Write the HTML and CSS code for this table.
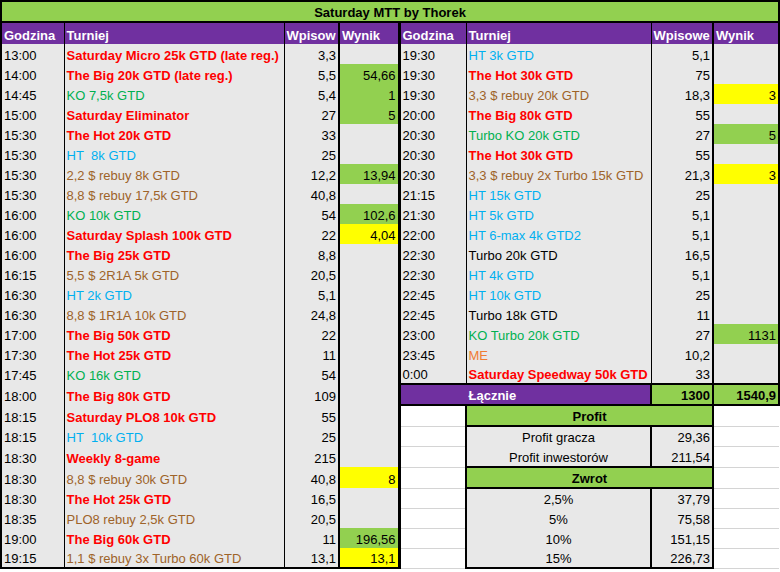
FILE: index.html
```html
<!DOCTYPE html>
<html lang="pl">
<head>
<meta charset="utf-8">
<title>Saturday MTT by Thorek</title>
<link rel="stylesheet" href="styles.css">
</head>
<body>
<table class="sheet">
  <colgroup>
    <col class="w1"><col class="w2"><col class="w3"><col class="w4">
    <col class="w5"><col class="w6"><col class="w7"><col class="w8">
  </colgroup>
  <tr class="title-row"><td class="title" colspan="8">Saturday MTT by Thorek</td></tr>
  <tr class="head-row">
    <td class="h c1">Godzina</td><td class="h c2">Turniej</td><td class="h c3">Wpisow</td><td class="h c4">Wynik</td>
    <td class="h c5">Godzina</td><td class="h c6">Turniej</td><td class="h c7">Wpisowe</td><td class="h c8">Wynik</td>
  </tr>
  <tr>
    <td class="c1">13:00</td><td class="c2 red">Saturday Micro 25k GTD (late reg.)</td><td class="c3 num">3,3</td><td class="c4 num"></td>
    <td class="c5">19:30</td><td class="c6 blue">HT 3k GTD</td><td class="c7 num">5,1</td><td class="c8 num"></td>
  </tr>
  <tr>
    <td class="c1">14:00</td><td class="c2 red">The Big 20k GTD (late reg.)</td><td class="c3 num">5,5</td><td class="c4 num green-bg">54,66</td>
    <td class="c5">19:30</td><td class="c6 red">The Hot 30k GTD</td><td class="c7 num">75</td><td class="c8 num"></td>
  </tr>
  <tr>
    <td class="c1">14:45</td><td class="c2 grn">KO 7,5k GTD</td><td class="c3 num">5,4</td><td class="c4 num green-bg">1</td>
    <td class="c5">19:30</td><td class="c6 brn">3,3 $ rebuy 20k GTD</td><td class="c7 num">18,3</td><td class="c8 num yellow-bg">3</td>
  </tr>
  <tr>
    <td class="c1">15:00</td><td class="c2 red">Saturday Eliminator</td><td class="c3 num">27</td><td class="c4 num green-bg">5</td>
    <td class="c5">20:00</td><td class="c6 red">The Big 80k GTD</td><td class="c7 num">55</td><td class="c8 num"></td>
  </tr>
  <tr>
    <td class="c1">15:30</td><td class="c2 red">The Hot 20k GTD</td><td class="c3 num">33</td><td class="c4 num"></td>
    <td class="c5">20:30</td><td class="c6 grn">Turbo KO 20k GTD</td><td class="c7 num">27</td><td class="c8 num green-bg">5</td>
  </tr>
  <tr>
    <td class="c1">15:30</td><td class="c2 blue">HT&nbsp; 8k GTD</td><td class="c3 num">25</td><td class="c4 num"></td>
    <td class="c5">20:30</td><td class="c6 red">The Hot 30k GTD</td><td class="c7 num">55</td><td class="c8 num"></td>
  </tr>
  <tr>
    <td class="c1">15:30</td><td class="c2 brn">2,2 $ rebuy 8k GTD</td><td class="c3 num">12,2</td><td class="c4 num green-bg">13,94</td>
    <td class="c5">20:30</td><td class="c6 brn">3,3 $ rebuy 2x Turbo 15k GTD</td><td class="c7 num">21,3</td><td class="c8 num yellow-bg">3</td>
  </tr>
  <tr>
    <td class="c1">15:30</td><td class="c2 brn">8,8 $ rebuy 17,5k GTD</td><td class="c3 num">40,8</td><td class="c4 num"></td>
    <td class="c5">21:15</td><td class="c6 blue">HT 15k GTD</td><td class="c7 num">25</td><td class="c8 num"></td>
  </tr>
  <tr>
    <td class="c1">16:00</td><td class="c2 grn">KO 10k GTD</td><td class="c3 num">54</td><td class="c4 num green-bg">102,6</td>
    <td class="c5">21:30</td><td class="c6 blue">HT 5k GTD</td><td class="c7 num">5,1</td><td class="c8 num"></td>
  </tr>
  <tr>
    <td class="c1">16:00</td><td class="c2 red">Saturday Splash 100k GTD</td><td class="c3 num">22</td><td class="c4 num yellow-bg">4,04</td>
    <td class="c5">22:00</td><td class="c6 blue">HT 6-max 4k GTD2</td><td class="c7 num">5,1</td><td class="c8 num"></td>
  </tr>
  <tr>
    <td class="c1">16:00</td><td class="c2 red">The Big 25k GTD</td><td class="c3 num">8,8</td><td class="c4 num"></td>
    <td class="c5">22:30</td><td class="c6">Turbo 20k GTD</td><td class="c7 num">16,5</td><td class="c8 num"></td>
  </tr>
  <tr>
    <td class="c1">16:15</td><td class="c2 brn">5,5 $ 2R1A 5k GTD</td><td class="c3 num">20,5</td><td class="c4 num"></td>
    <td class="c5">22:30</td><td class="c6 blue">HT 4k GTD</td><td class="c7 num">5,1</td><td class="c8 num"></td>
  </tr>
  <tr>
    <td class="c1">16:30</td><td class="c2 blue">HT 2k GTD</td><td class="c3 num">5,1</td><td class="c4 num"></td>
    <td class="c5">22:45</td><td class="c6 blue">HT 10k GTD</td><td class="c7 num">25</td><td class="c8 num"></td>
  </tr>
  <tr>
    <td class="c1">16:30</td><td class="c2 brn">8,8 $ 1R1A 10k GTD</td><td class="c3 num">24,8</td><td class="c4 num"></td>
    <td class="c5">22:45</td><td class="c6">Turbo 18k GTD</td><td class="c7 num">11</td><td class="c8 num"></td>
  </tr>
  <tr>
    <td class="c1">17:00</td><td class="c2 red">The Big 50k GTD</td><td class="c3 num">22</td><td class="c4 num"></td>
    <td class="c5">23:00</td><td class="c6 grn">KO Turbo 20k GTD</td><td class="c7 num">27</td><td class="c8 num green-bg">1131</td>
  </tr>
  <tr>
    <td class="c1">17:30</td><td class="c2 red">The Hot 25k GTD</td><td class="c3 num">11</td><td class="c4 num"></td>
    <td class="c5">23:45</td><td class="c6 org">ME</td><td class="c7 num">10,2</td><td class="c8 num"></td>
  </tr>
  <tr>
    <td class="c1">17:45</td><td class="c2 grn">KO 16k GTD</td><td class="c3 num">54</td><td class="c4 num"></td>
    <td class="c5">0:00</td><td class="c6 red">Saturday Speedway 50k GTD</td><td class="c7 num">33</td><td class="c8 num"></td>
  </tr>
  <tr class="tall">
    <td class="c1">18:00</td><td class="c2 red">The Big 80k GTD</td><td class="c3 num">109</td><td class="c4 num"></td>
    <td class="c5 sum-purple" colspan="2"><span class="sum-label">Łącznie</span></td><td class="c7 num sum-green">1300</td><td class="c8 num sum-green">1540,9</td>
  </tr>
  <tr class="tall">
    <td class="c1">18:15</td><td class="c2 red">Saturday PLO8 10k GTD</td><td class="c3 num">55</td><td class="c4 num"></td>
    <td class="c5 blank"></td><td class="box-head" colspan="2">Profit</td><td class="c8 blank"></td>
  </tr>
  <tr>
    <td class="c1">18:15</td><td class="c2 blue">HT&nbsp; 10k GTD</td><td class="c3 num">25</td><td class="c4 num"></td>
    <td class="c5 blank"></td><td class="box-l">Profit gracza</td><td class="box-r num">29,36</td><td class="c8 blank"></td>
  </tr>
  <tr class="tall">
    <td class="c1">18:30</td><td class="c2 red">Weekly 8-game</td><td class="c3 num">215</td><td class="c4 num"></td>
    <td class="c5 blank"></td><td class="box-l box-end">Profit inwestorów</td><td class="box-r num box-end">211,54</td><td class="c8 blank"></td>
  </tr>
  <tr class="tall">
    <td class="c1">18:30</td><td class="c2 brn">8,8 $ rebuy 30k GTD</td><td class="c3 num">40,8</td><td class="c4 num yellow-bg">8</td>
    <td class="c5 blank"></td><td class="box-head" colspan="2">Zwrot</td><td class="c8 blank"></td>
  </tr>
  <tr>
    <td class="c1">18:30</td><td class="c2 red">The Hot 25k GTD</td><td class="c3 num">16,5</td><td class="c4 num"></td>
    <td class="c5 blank"></td><td class="box-l">2,5%</td><td class="box-r num">37,79</td><td class="c8 blank"></td>
  </tr>
  <tr>
    <td class="c1">18:35</td><td class="c2 brn">PLO8 rebuy 2,5k GTD</td><td class="c3 num">20,5</td><td class="c4 num"></td>
    <td class="c5 blank"></td><td class="box-l">5%</td><td class="box-r num">75,58</td><td class="c8 blank"></td>
  </tr>
  <tr>
    <td class="c1">19:00</td><td class="c2 red">The Big 60k GTD</td><td class="c3 num">11</td><td class="c4 num green-bg">196,56</td>
    <td class="c5 blank"></td><td class="box-l">10%</td><td class="box-r num">151,15</td><td class="c8 blank"></td>
  </tr>
  <tr class="last-row">
    <td class="c1">19:15</td><td class="c2 brn">1,1 $ rebuy 3x Turbo 60k GTD</td><td class="c3 num">13,1</td><td class="c4 num yellow-bg">13,1</td>
    <td class="c5 blank"></td><td class="box-l box-end">15%</td><td class="box-r num box-end">226,73</td><td class="c8 blank"></td>
  </tr>
</table>
</body>
</html>
```

FILE: styles.css
```css
html, body {
  margin: 0;
  padding: 0;
  background: #ffffff;
}

body {
  font-family: "Liberation Sans", Arial, sans-serif;
  font-size: 13px;
  color: #000000;
}

.sheet {
  border-collapse: collapse;
  table-layout: fixed;
  width: 778px;
}

.w1 { width: 63px; }
.w2 { width: 220px; }
.w3 { width: 55px; }
.w4 { width: 60px; }
.w5 { width: 67px; }
.w6 { width: 185px; }
.w7 { width: 62px; }
.w8 { width: 66px; }

.sheet tr {
  height: 20px;
}

.sheet tr.tall {
  height: 21px;
}

.sheet tr.title-row {
  height: 21px;
}

.sheet tr.head-row {
  height: 22px;
}

.sheet td {
  padding: 0 2px 0 2px;
  line-height: 16px;
  vertical-align: bottom;
  white-space: nowrap;
  overflow: hidden;
  background: #e8e8e8;
  text-align: left;
}

.sheet td.title {
  background: #92d050;
  border: 2px solid #000000;
  text-align: center;
  font-weight: bold;
}

.sheet td.h {
  background: #7030a0;
  color: #ffffff;
  font-weight: bold;
}

.c1 { border-left: 2px solid #000000; }
.c2 { border-left: 1px solid #000000; }
.c3 { border-left: 1px solid #000000; }
.c4 { border-left: 2px solid #000000; }
.c5 { border-left: 3px solid #000000; }
.c6 { border-left: 1px solid #000000; }
.c7 { border-left: 1px solid #000000; }
.c8 { border-left: 2px solid #000000; border-right: 2px solid #000000; }

.sheet td.num {
  text-align: right;
}

.red { color: #ff0000; font-weight: bold; }
.blue { color: #00b0f0; }
.grn { color: #00b050; }
.brn { color: #9e6329; }
.org { color: #f07c33; }

.sheet td.green-bg { background: #92d050; }
.sheet td.yellow-bg { background: #ffff00; }

.sheet td.sum-purple {
  background: #7030a0;
  color: #ffffff;
  font-weight: bold;
  border-top: 2px solid #000000;
  border-bottom: 2px solid #000000;
  border-right: 2px solid #000000;
  text-align: left;
}

.sum-label {
  display: block;
  margin-left: 66px;
  text-align: left;
}

.sheet td.sum-green {
  background: #92d050;
  font-weight: bold;
  border-top: 2px solid #000000;
  border-bottom: 2px solid #000000;
  border-left: 2px solid #000000;
}

.sheet td.blank {
  background: #ffffff;
  border-bottom: 1px solid #d4d4d4;
}

.sheet td.c8.blank {
  border-right: none;
}

.sheet td.box-head {
  background: #92d050;
  font-weight: bold;
  text-align: center;
  border: 2px solid #000000;
}

.sheet td.box-l {
  text-align: center;
  border-left: 2px solid #000000;
  border-right: 2px solid #000000;
}

.sheet td.box-r {
  border-right: 2px solid #000000;
}

.sheet td.box-end {
  border-bottom: 2px solid #000000;
}

.last-row .c1,
.last-row .c2,
.last-row .c3,
.last-row .c4 {
  border-bottom: 2px solid #000000;
}
```
